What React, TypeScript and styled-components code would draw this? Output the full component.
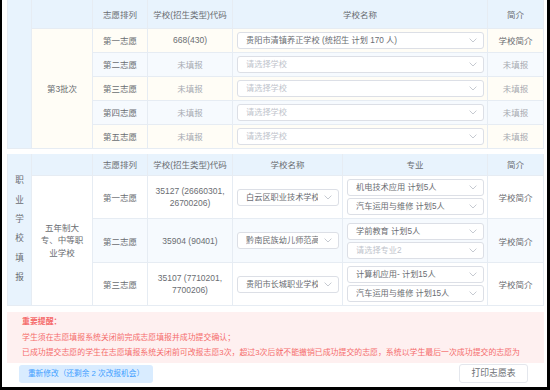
import React from "react";
import styled, { createGlobalStyle } from "styled-components";

type Choice = {
  order: string;
  code: string;
  school?: string;
  intro: string;
};

type VocChoice = {
  order: string;
  code: string[];
  school: string;
  majors: { text: string; empty?: boolean }[];
};

const batchChoices: Choice[] = [
  { order: "第一志愿", code: "668(430)", school: "贵阳市清镇养正学校 (统招生 计划 170 人)", intro: "学校简介" },
  { order: "第二志愿", code: "未填报", intro: "未填报" },
  { order: "第三志愿", code: "未填报", intro: "未填报" },
  { order: "第四志愿", code: "未填报", intro: "未填报" },
  { order: "第五志愿", code: "未填报", intro: "未填报" },
];

const vocChoices: VocChoice[] = [
  {
    order: "第一志愿",
    code: ["35127 (26660301,", "26700206)"],
    school: "白云区职业技术学校（统招生 计划 60 人）",
    majors: [{ text: "机电技术应用 计划5人" }, { text: "汽车运用与维修 计划5人" }],
  },
  {
    order: "第二志愿",
    code: ["35904 (90401)"],
    school: "黔南民族幼儿师范高等专科学校",
    majors: [{ text: "学前教育 计划5人" }, { text: "请选择专业2", empty: true }],
  },
  {
    order: "第三志愿",
    code: ["35107 (7710201,", "7700206)"],
    school: "贵阳市长城职业学校（统招生 计划 80 人）",
    majors: [{ text: "计算机应用- 计划15人" }, { text: "汽车运用与维修 计划15人" }],
  },
];

const Chevron = () => (
  <svg width="8" height="5" viewBox="0 0 8 5">
    <path d="M0.6 0.6 L4 4 L7.4 0.6" stroke="#c0c4cc" strokeWidth="0.9" fill="none" />
  </svg>
);

const SelectBox = ({ text, empty }: { text: string; empty?: boolean }) => (
  <Sselect>
    <SselectText $empty={empty}>{text}</SselectText>
    <Chevron />
  </Sselect>
);

const App = () => {
  return (
    <>
      <GlobalStyle />
      <Sframe>
        <Stable>
          <colgroup>
            <col style={{ width: 24 }} />
            <col style={{ width: 61 }} />
            <col style={{ width: 55 }} />
            <col style={{ width: 85 }} />
            <col style={{ width: 255 }} />
            <col style={{ width: 56 }} />
          </colgroup>
          <tbody>
            <ShRow $h={28}>
              <Sside rowSpan={6} />
              <Sth />
              <Sth>志愿排列</Sth>
              <Sth>学校(招生类型)代码</Sth>
              <Sth>学校名称</Sth>
              <Sth>简介</Sth>
            </ShRow>
            {batchChoices.map((c, i) => (
              <Srow key={c.order} $h={24}>
                {i === 0 && (
                  <Std rowSpan={5} $bg="#fffdf6">
                    第3批次
                  </Std>
                )}
                <Std $bg={i % 2 ? "#f6fafe" : "#fffdf6"}>{c.order}</Std>
                <Std $bg={i % 2 ? "#f6fafe" : "#fffdf6"} $muted={c.code === "未填报"}>
                  {c.code}
                </Std>
                <SselectCell $bg={i % 2 ? "#f6fafe" : "#fffdf6"}>
                  <SelectBox text={c.school ?? "请选择学校"} empty={!c.school} />
                </SselectCell>
                <Std $bg={i % 2 ? "#f6fafe" : "#fffdf6"} $muted={c.intro === "未填报"}>
                  {c.intro}
                </Std>
              </Srow>
            ))}
          </tbody>
        </Stable>

        <Stable $gap>
          <colgroup>
            <col style={{ width: 24 }} />
            <col style={{ width: 61 }} />
            <col style={{ width: 55 }} />
            <col style={{ width: 85 }} />
            <col style={{ width: 110 }} />
            <col style={{ width: 145 }} />
            <col style={{ width: 56 }} />
          </colgroup>
          <tbody>
            <ShRow $h={22}>
              <Sside rowSpan={4}>
                <Svertical>职业学校填报</Svertical>
              </Sside>
              <Sth />
              <Sth>志愿排列</Sth>
              <Sth>学校(招生类型)代码</Sth>
              <Sth>学校名称</Sth>
              <Sth>专业</Sth>
              <Sth>简介</Sth>
            </ShRow>
            {vocChoices.map((c, i) => (
              <Srow key={c.order} $h={i === 1 ? 44 : 43}>
                {i === 0 && (
                  <Std rowSpan={3} $bg="#fff">
                    <Sbatch>五年制大专、中等职业学校</Sbatch>
                  </Std>
                )}
                <Std $bg={i % 2 ? "#f6fafe" : "#fff"}>{c.order}</Std>
                <Std $bg={i % 2 ? "#f6fafe" : "#fff"}>
                  {c.code.map((line) => (
                    <ScodeLine key={line}>{line}</ScodeLine>
                  ))}
                </Std>
                <SselectCell $bg={i % 2 ? "#f6fafe" : "#fff"}>
                  <SelectBox text={c.school} />
                </SselectCell>
                <SselectCell $bg={i % 2 ? "#f6fafe" : "#fff"}>
                  <SmajorStack>
                    {c.majors.map((m) => (
                      <SelectBox key={m.text} text={m.text} empty={m.empty} />
                    ))}
                  </SmajorStack>
                </SselectCell>
                <Std $bg={i % 2 ? "#f6fafe" : "#fff"}>学校简介</Std>
              </Srow>
            ))}
          </tbody>
        </Stable>

        <Snotice>
          <SnoticeTitle>重要提醒：</SnoticeTitle>
          <p>学生须在志愿填报系统关闭前完成志愿填报并成功提交确认；</p>
          <p>
            已成功提交志愿的学生在志愿填报系统关闭前可改报志愿3次，超过3次后就不能撤销已成功提交的志愿，系统以学生最后一次成功提交的志愿为准。
          </p>
        </Snotice>

        <Sactions>
          <SretryButton>重新修改（还剩余 2 次改报机会）</SretryButton>
          <SprintButton>打印志愿表</SprintButton>
        </Sactions>
      </Sframe>
    </>
  );
};

const GlobalStyle = createGlobalStyle`
  html, body {
    margin:0;
    padding:0;
    background:#000;
  }
  body {
    font-family:"Liberation Sans", "Noto Sans CJK SC", sans-serif;
  }
`;

const Sframe = styled.div`
 width:545px;
 height:387px;
 margin-left:2px;
 background:#fff;
 box-sizing:border-box;
 padding:0 3px 0 5px;
 overflow:hidden;
`;

const Stable = styled.table<{ $gap?: boolean }>`
 width:536px;
 table-layout:fixed;
 border-collapse:collapse;
 margin-top:${(p) => (p.$gap ? "5px" : "0")};
 font-size:8.5px;
 color:#6a6d72;
 td, th {
   border:1px solid #e6ecf3;
 }
 tr:first-child th, tr:first-child td {
   border-top:none;
 }
`;

const ShRow = styled.tr<{ $h: number }>`
 height:${(p) => p.$h}px;
`;

const Srow = styled.tr<{ $h: number }>`
 height:${(p) => p.$h}px;
`;

const Sth = styled.th`
 background:#e8f3fd;
 font-weight:normal;
 text-align:center;
 padding:0;
`;

const Sside = styled.td`
 background:#e8f3fd;
 padding:0;
 text-align:center;
 vertical-align:middle;
`;

const Svertical = styled.div`
 width:1em;
 margin:0 auto;
 font-size:8.6px;
 line-height:19.3px;
 word-break:break-all;
`;

const Std = styled.td<{ $bg: string; $muted?: boolean }>`
 background:${(p) => p.$bg};
 color:${(p) => (p.$muted ? "#a8abb2" : "#6a6d72")};
 text-align:center;
 vertical-align:middle;
 padding:0;
`;

const SselectCell = styled.td<{ $bg: string }>`
 background:${(p) => p.$bg};
 padding:0 3px 0 4px;
 vertical-align:middle;
`;

const Sbatch = styled.div`
 width:48px;
 margin:0 auto;
 line-height:12.5px;
`;

const ScodeLine = styled.div`
 line-height:12px;
`;

const SmajorStack = styled.div`
 display:flex;
 flex-direction:column;
 gap:2px;
`;

const Sselect = styled.div`
 height:17px;
 box-sizing:border-box;
 border:1px solid #dcdfe6;
 border-radius:3px;
 background:#fff;
 display:flex;
 align-items:center;
 gap:6px;
 padding:0 6px 0 8px;
`;

const SselectText = styled.span<{ $empty?: boolean }>`
 flex:1;
 min-width:0;
 overflow:hidden;
 white-space:nowrap;
 font-size:8.2px;
 line-height:15px;
 color:${(p) => (p.$empty ? "#c0c4cc" : "#6a6d72")};
`;

const Snotice = styled.div`
 margin-top:6px;
 height:51px;
 overflow:hidden;
 box-sizing:border-box;
 padding:2px 10px 0 15px;
 background:#fef0f0;
 color:#f56c6c;
 font-size:7.9px;
 line-height:15.7px;
 p {
   margin:0;
 }
`;

const SnoticeTitle = styled.p`
 font-weight:bold;
`;

const Sactions = styled.div`
 display:flex;
 justify-content:space-between;
 align-items:flex-start;
 padding:1px 16px 0 12px;
`;

const SretryButton = styled.button`
 width:134px;
 height:18px;
 margin-top:1px;
 padding:0;
 border:none;
 border-radius:3px;
 background:#d9ecff;
 color:#409eff;
 font-family:inherit;
 font-size:7.7px;
 line-height:18px;
`;

const SprintButton = styled.button`
 width:69px;
 height:19px;
 padding:0;
 border:1px solid #e4e7ed;
 border-radius:3px;
 background:#fff;
 color:#6a6d72;
 font-family:inherit;
 font-size:8.8px;
 line-height:17px;
`;

export default App;
